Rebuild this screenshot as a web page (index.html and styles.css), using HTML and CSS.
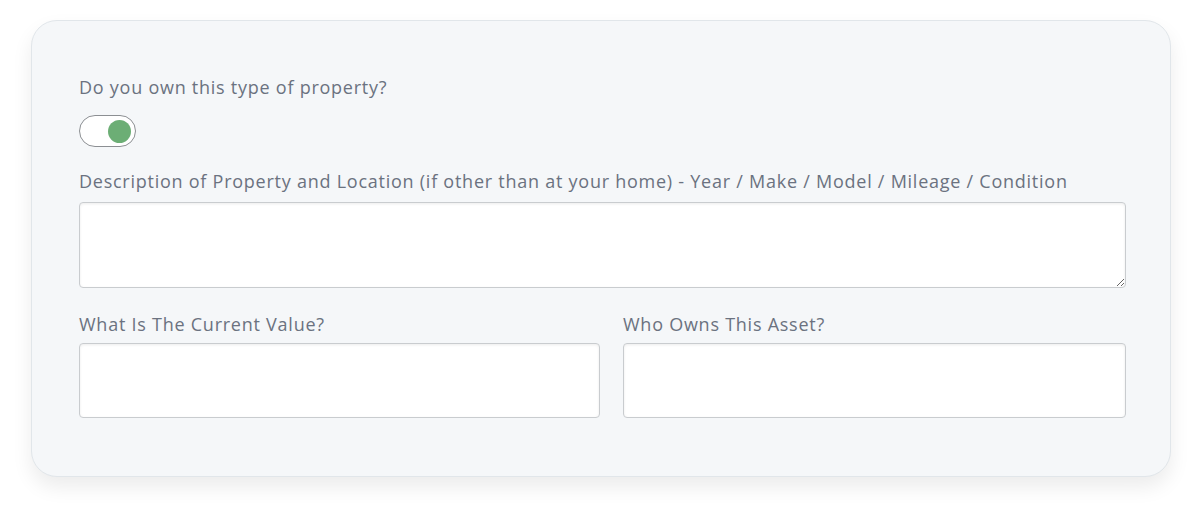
FILE: index.html
```html
<!DOCTYPE html>
<html lang="en">
<head>
    <meta charset="UTF-8">
    <meta name="viewport" content="width=device-width, initial-scale=1.0">
    <title>Property</title>
    <link rel="stylesheet" href="styles.css">
</head>
<body>
    <div class="page">
        <div class="asset-card">
            <div class="field">
                <label class="field-label toggle-label">Do you own this type of property?</label>
                <label class="toggle">
                    <input type="checkbox" checked>
                    <span class="toggle-track"><span class="toggle-knob"></span></span>
                </label>
            </div>

            <div class="field">
                <label class="field-label" for="description">Description of Property and Location (if other than at your home) - Year / Make / Model / Mileage / Condition</label>
                <textarea id="description" class="text-box area-box"></textarea>
            </div>

            <div class="field-row">
                <div class="field">
                    <label class="field-label row-label" for="current-value">What Is The Current Value?</label>
                    <input type="text" id="current-value" class="text-box">
                </div>
                <div class="field">
                    <label class="field-label row-label" for="owner">Who Owns This Asset?</label>
                    <input type="text" id="owner" class="text-box">
                </div>
            </div>
        </div>
    </div>
</body>
</html>
```

FILE: styles.css
```css
* {
    box-sizing: border-box;
}

body {
    margin: 0;
    background-color: #fff;
    font-family: "Open Sans", "Lato", sans-serif;
}

.page {
    padding: 20px 29px 40px 31px;
}

.asset-card {
    background-color: #f5f7f9;
    border: 1px solid #e1e6ea;
    border-radius: 26px;
    padding: 54px 44px 58px 47px;
    box-shadow: 0 10px 20px rgba(0, 0, 0, 0.08);
}

.field {
    display: flex;
    flex-direction: column;
}

.field-label {
    font-size: 18px;
    color: #6b7280;
    line-height: 24px;
    letter-spacing: 0.75px;
    margin-bottom: 9px;
}

.toggle-label {
    margin-bottom: 16px;
}

.row-label {
    margin-bottom: 7px;
}

.toggle {
    display: inline-block;
    width: 57px;
    height: 32px;
    margin-bottom: 22px;
    cursor: pointer;
}

.toggle input {
    display: none;
}

.toggle-track {
    display: flex;
    align-items: center;
    justify-content: flex-end;
    width: 57px;
    height: 32px;
    padding: 0 4px;
    background-color: #fff;
    border: 1px solid #8c8f93;
    border-radius: 16px;
}

.toggle-knob {
    width: 23px;
    height: 23px;
    border-radius: 50%;
    background-color: #6cae75;
}

.text-box {
    width: 100%;
    height: 75px;
    background-color: #fff;
    border: 1px solid #c9cccf;
    border-radius: 4px;
    box-shadow: inset 0 1px 3px rgba(0, 0, 0, 0.08);
    font-size: 16px;
    font-family: inherit;
    padding: 8px 10px;
}

.area-box {
    height: 86px;
    resize: vertical;
    margin-bottom: 24px;
}

.field-row {
    display: grid;
    grid-template-columns: 521px 1fr;
    gap: 23px;
}
```
